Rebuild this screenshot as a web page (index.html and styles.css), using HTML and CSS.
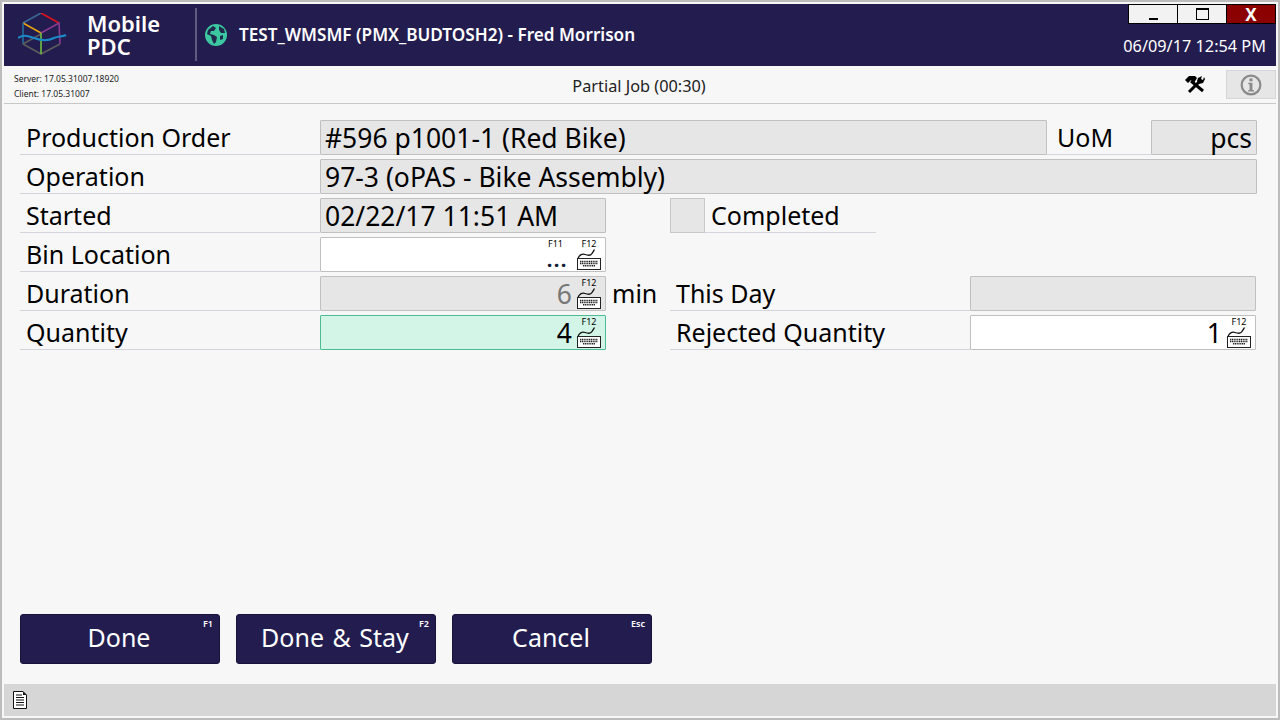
FILE: index.html
```html
<!DOCTYPE html>
<html lang="en">
<head>
<meta charset="utf-8">
<title>Mobile PDC</title>
<link rel="stylesheet" href="styles.css">
</head>
<body>
<svg class="defs" width="0" height="0" aria-hidden="true">
  <symbol id="kbd" viewBox="0 0 26 22">
    <path d="M2 10.500C3 7 6 5.500 9 6.500C12 7.500 15 7.500 16 5.500C16.800 4 17.500 3 18.500 1.500" fill="none" stroke="#111" stroke-width="1.300"/>
    <rect x="1.500" y="10.500" width="23" height="11" fill="#fff" stroke="#222" stroke-width="1"/>
    <path d="M4 13.500h18M4 15.500h18M7 17.800h12" stroke="#222" stroke-width="1.600" stroke-dasharray="1.200 .6"/>
  </symbol>
</svg>
<div class="window">
  <header class="topbar">
    <div class="brand">
      <svg class="logo" width="52" height="46" viewBox="0 0 52 46" fill="none" stroke-width="1.600">
        <path d="M5 10 23 0" stroke="#3a6a94"/>
        <path d="M23 0 41 10" stroke="#e0101c"/>
        <path d="M5 10 23 20" stroke="#e8a010"/>
        <path d="M23 20 41 10 42 31" stroke="#8a3a90"/>
        <path d="M5 10V31" stroke="#1f6f9f"/>
        <path d="M5 31 23 41 42 31M5 31 23 21" stroke="#5c5c5c"/>
        <path d="M23 20V41" stroke="#70c040"/>
        <path d="M0 25C6 21 10 23 16 25C24 28 30 28 36 25C40 23 44 24 48 22" stroke="#1b8ac8" stroke-width="2"/>
      </svg>
      <div class="appname">Mobile<br>PDC</div>
    </div>
    <div class="session">
      <svg class="globe" width="24" height="24" viewBox="0 0 24 24">
        <circle cx="12" cy="12" r="11" fill="#3cc8a0"/>
        <path d="M4 7 9 3 12 5 10 8 7 8 6 11 10 12 13 14 12 19 10 21 8 17 7 13 3 11ZM15 3 20 6 21 10 17 10 15 7ZM16 13 19 12 19 16 16 17Z" fill="#1f2a4c"/>
      </svg>
      <span class="session-title">TEST_WMSMF (PMX_BUDTOSH2) - Fred Morrison</span>
    </div>
    <div class="winside">
      <div class="winbtns">
        <div class="winbtn"><span class="minimize"></span></div>
        <div class="winbtn"><span class="maximize"></span></div>
        <div class="winbtn close">X</div>
      </div>
      <div class="clock">06/09/17 12:54 PM</div>
    </div>
  </header>

  <div class="subbar">
    <div class="versions">
      <div>Server: 17.05.31007.18920</div>
      <div>Client: 17.05.31007</div>
    </div>
    <div class="page-title">Partial Job (00:30)</div>
    <div class="tools">
      <svg class="tool-icon" width="20" height="20" viewBox="0 0 20 20">
        <path d="M6 6 18 16" stroke="#000" stroke-width="3" fill="none"/>
        <path d="M0 5 4 1H10L12 3 9 8 6 5 3 8Z" fill="#000"/>
        <path d="M14 7 4 17" stroke="#000" stroke-width="3" fill="none"/>
        <path d="M13 3 17 1 16 4 18 5 19 2 20 4 18 8 14 9 12 6Z" fill="#000"/>
      </svg>
      <div class="info-btn">
        <svg width="22" height="22" viewBox="0 0 20 20">
          <circle cx="10" cy="10" r="8.500" fill="none" stroke="#8a8a8a" stroke-width="2"/>
          <rect x="8.600" y="4" width="2.800" height="2.600" fill="#8a8a8a"/>
          <path d="M7.500 8h3.800v6.600h1.400v1.400H7.500v-1.400h1.200V9.400H7.500Z" fill="#8a8a8a"/>
        </svg>
      </div>
    </div>
  </div>

  <main class="form">
    <div class="row">
      <div class="label">Production Order</div>
      <div class="field ro w-order">#596 p1001-1 (Red Bike)</div>
      <div class="label uom">UoM</div>
      <div class="field ro w-uom right">pcs</div>
    </div>
    <div class="row">
      <div class="label">Operation</div>
      <div class="field ro w-op">97-3 (oPAS - Bike Assembly)</div>
    </div>
    <div class="row">
      <div class="label">Started</div>
      <div class="field ro w-std">02/22/17 11:51 AM</div>
      <div class="checkwrap">
        <div class="check"></div>
        <div class="label completed">Completed</div>
      </div>
    </div>
    <div class="row">
      <div class="label">Bin Location</div>
      <div class="field w-std right white has-keys">
        <div class="lookup">
          <span class="f11">F11</span>
          <span class="dots">...</span>
        </div>
        <span class="keys"><span class="fkey">F12</span><svg width="26" height="22"><use href="#kbd"/></svg></span>
      </div>
    </div>
    <div class="row">
      <div class="label">Duration</div>
      <div class="field ro w-std right has-keys">
        <span class="val muted">6</span>
        <span class="keys"><span class="fkey">F12</span><svg width="26" height="22"><use href="#kbd"/></svg></span>
      </div>
      <div class="unit">min</div>
      <div class="label side">This Day</div>
      <div class="field ro w-side"></div>
    </div>
    <div class="row">
      <div class="label">Quantity</div>
      <div class="field focus w-std right has-keys">
        <span class="val">4</span>
        <span class="keys"><span class="fkey">F12</span><svg width="26" height="22"><use href="#kbd"/></svg></span>
      </div>
      <div class="unit"></div>
      <div class="label side">Rejected Quantity</div>
      <div class="field white w-side right has-keys">
        <span class="val">1</span>
        <span class="keys"><span class="fkey">F12</span><svg width="26" height="22"><use href="#kbd"/></svg></span>
      </div>
    </div>
  </main>

  <div class="actions">
    <div class="btn">Done<span class="hot">F1</span></div>
    <div class="btn">Done &amp; Stay<span class="hot">F2</span></div>
    <div class="btn">Cancel<span class="hot">Esc</span></div>
  </div>

  <footer class="status">
    <svg width="14" height="18" viewBox="0 0 14 18">
      <path d="M.5.5H10L13.500 4V17.500H.5Z" fill="#fff" stroke="#111"/>
      <path d="M10 .5V4H13.500Z" fill="#111"/>
      <path d="M3 4h6M3 6.500h8M3 9h8M3 11.500h8M3 14h8" stroke="#111" stroke-width="1.200"/>
    </svg>
  </footer>
</div>
</body>
</html>
```

FILE: styles.css
```css
* { box-sizing: border-box; }
html, body { margin: 0; height: 100%; }
body { font-family: "Noto Sans", "Open Sans", sans-serif; color: #000; background: #f7f7f7; overflow: hidden; }
.defs { position: absolute; }
.window { width: 1280px; height: 720px; border: 2px solid #bcbcbc; padding: 2px; display: flex; flex-direction: column; background: #f7f7f7; }

.topbar { height: 62px; background: #231d4f; color: #fff; display: flex; flex: none; }
.brand { width: 191px; display: flex; align-items: center; padding-left: 14px; flex: none; }
.logo { flex: none; margin-top: 1px; }
.appname { margin-left: 17px; font-size: 22px; line-height: 23px; font-weight: 600; }
.session { flex: 1; display: flex; align-items: center; border-left: 2px solid #5f5b80; margin: 4px 0 5px; padding-left: 7px; }
.globe { flex: none; }
.session-title { margin-left: 11px; font-size: 17.150px; font-weight: 600; white-space: nowrap; }
.winside { width: 148px; flex: none; display: flex; flex-direction: column; align-items: flex-end; }
.winbtns { display: flex; height: 20px; width: 148px; }
.winbtn { flex: 1; background: #f2f2f2; border: 1px solid #000; border-left: 0; display: flex; align-items: center; justify-content: center; }
.winbtn:first-child { border-left: 1px solid #000; }
.winbtn.close { background: #8b0000; color: #fff; font-weight: 700; font-size: 17px; }
.minimize { width: 9px; height: 2px; background: #000; margin-top: 9px; }
.maximize { width: 13px; height: 12px; border: 1px solid #000; border-top-width: 2px; }
.clock { font-size: 16.300px; margin-top: 11px; padding-right: 10px; white-space: nowrap; }

.subbar { height: 38px; flex: none; border-bottom: 1px solid #c8c8c8; position: relative; display: flex; justify-content: space-between; }
.versions { font-size: 8.500px; line-height: 15px; padding: 5px 0 0 10px; color: #222; }
.page-title { position: absolute; left: 0; right: 2px; top: 9px; text-align: center; font-size: 16.300px; line-height: 22px; color: #222; }
.tools { display: flex; align-items: flex-start; }
.tool-icon { margin: 9px 21px 0 0; }
.info-btn { width: 50px; height: 29px; margin-top: 4px; background: #e6e6e6; border: 1px solid #d6d6d6; display: flex; align-items: center; justify-content: center; }

.form { flex: 1; padding: 16px 0 0 16px; display: flex; flex-direction: column; gap: 4px; }
.row { display: flex; height: 35px; flex: none; }
.label { width: 300px; flex: none; border-bottom: 1px solid #d4d4dc; font-size: 25px; line-height: 34px; padding-left: 6px; white-space: nowrap; }
.field { height: 35px; flex: none; border: 1px solid #c0c0c0; border-radius: 1px; font-size: 26.500px; line-height: 34px; padding: 0 4px; white-space: nowrap; display: flex; }
.ro { background: #e6e6e6; }
.white { background: #fff; }
.focus { background: #d2f5e8; border-color: #4dbb96; }
.right { justify-content: flex-end; }
.w-order { width: 727px; }
.w-op { width: 937px; }
.w-std { width: 286px; }
.w-uom { width: 106px; }
.w-side { width: 286px; }
.uom { width: 104px; padding-left: 10px; }
.checkwrap { display: flex; margin-left: 64px; }
.check { width: 35px; height: 35px; background: #e6e6e6; border: 1px solid #c8c8c8; }
.completed { width: 171px; }
.unit { width: 64px; flex: none; font-size: 25px; line-height: 34px; padding-left: 6px; }
.side { padding-left: 6px; }
.has-keys { padding-right: 2px; }
.val { margin-right: 3px; }
.muted { color: #777; }
.keys { width: 28px; display: flex; flex-direction: column; align-items: center; flex: none; padding-top: 1px; }
.keys svg { display: block; margin-top: -1px; }
.fkey { font-size: 9px; line-height: 10px; }
.lookup { width: 30px; margin-right: 5px; display: flex; flex-direction: column; align-items: flex-end; }
.f11 { font-size: 9px; line-height: 10px; margin: 1px 7px 0 0; }
.dots { font-size: 20px; line-height: 21px; font-weight: 700; letter-spacing: 1.500px; color: #10203a; margin-right: 2px; }

.actions { display: flex; gap: 16px; padding: 0 0 20px 16px; flex: none; }
.btn { width: 200px; height: 50px; padding: 0 2px 4px 0; background: #231d4f; border: 1px solid #17133a; border-radius: 3px; color: #fff; font-size: 25px; word-spacing: 2px; display: flex; align-items: center; justify-content: center; position: relative; }
.hot { position: absolute; top: 3px; right: 6px; font-size: 9px; line-height: 12px; font-weight: 600; }

.status { height: 32px; background: #d6d6d6; flex: none; padding: 7px 0 0 9px; }
.status svg { display: block; }
```
